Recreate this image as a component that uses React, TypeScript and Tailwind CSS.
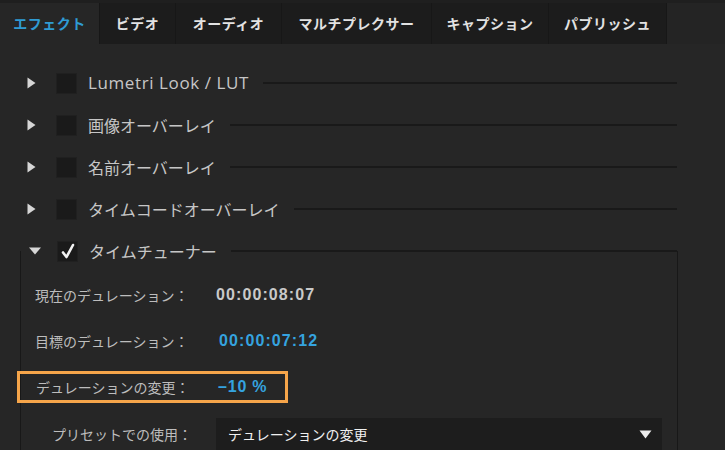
import React from 'react'

const jp = { fontFamily: '"Noto Sans CJK JP", "Noto Sans", sans-serif' }
const num = { fontFamily: '"Liberation Sans", "Noto Sans CJK JP", sans-serif' }
const latin = { fontFamily: '"Open Sans", "Noto Sans CJK JP", sans-serif' }

const tabs = ['エフェクト', 'ビデオ', 'オーディオ', 'マルチプレクサー', 'キャプション', 'パブリッシュ']
const tabWidths = ['w-[100px]', 'w-[76px]', 'w-[106px]', 'w-[150px]', 'w-[117px]', 'w-[118px]']

function Arrow({ open }: { open?: boolean }) {
  if (open) {
    return (
      <svg width="14" height="8" viewBox="0 0 14 8" className="shrink-0">
        <path d="M1 0.5 H13 L7 7.5 Z" fill="#d6d6d6" />
      </svg>
    )
  }
  return (
    <svg width="9" height="12" viewBox="0 0 9 12" className="shrink-0">
      <path d="M0.5 0.5 V11.5 L8.5 6 Z" fill="#d6d6d6" />
    </svg>
  )
}

function Check({ checked }: { checked?: boolean }) {
  return (
    <div className="w-[21px] h-[21px] bg-[#1a1a1a] border border-[#202020] flex items-center justify-center shrink-0">
      {checked && (
        <svg width="16" height="17" viewBox="0 0 16 17">
          <path d="M3 9.5 L6.5 14 L13 2" stroke="#f2f2f2" strokeWidth="2.6" fill="none" strokeLinecap="round" strokeLinejoin="round" />
        </svg>
      )}
    </div>
  )
}

function EffectRow({ label, isLatin }: { label: string; isLatin?: boolean }) {
  return (
    <div className="h-[42px] flex items-center pl-[27px] pr-[48px]">
      <div className="w-[29px]"><Arrow /></div>
      <Check />
      <span
        className={`ml-[11px] text-[#c6c6c6] whitespace-nowrap ${isLatin ? 'text-[17px] tracking-[0.6px]' : 'text-[16px]'}`}
        style={isLatin ? latin : jp}
      >
        {label}
      </span>
      <div className="flex-1 h-[2px] bg-[#191919] ml-[14px]" />
    </div>
  )
}

export default function App() {
  return (
    <div className="w-[725px] h-[450px] overflow-hidden bg-[#262626] flex flex-col" style={jp}>
      {/* Tabs */}
      <div className="h-[44px] flex items-end bg-[#1f1f1f] shrink-0">
        <div className="flex h-[41px] flex-1">
          {tabs.map((t, i) => (
            <div
              key={t}
              className={`${tabWidths[i]} flex items-center justify-center text-[14px] tracking-[0.5px] font-bold border-r border-[#171717] ${
                i === 0 ? 'bg-[#262626] text-[#2f9bd3]' : 'bg-[#1c1c1c] text-[#e2e2e2]'
              }`}
            >
              {t}
            </div>
          ))}
          <div className="flex-1 bg-[#242424]" />
        </div>
      </div>

      <div className="pt-[18px] flex flex-col">
        <EffectRow label="Lumetri Look / LUT" isLatin />
        <EffectRow label="画像オーバーレイ" />
        <EffectRow label="名前オーバーレイ" />
        <EffectRow label="タイムコードオーバーレイ" />

        {/* Time tuner group */}
        <div className="mt-[21px] ml-[20px] mr-[47px] border-l border-r border-[#181818] h-[300px] flex flex-col">
          <div className="-mt-[21px] h-[42px] shrink-0 flex items-center pl-[7px]">
            <div className="w-[29px]"><Arrow open /></div>
            <Check checked />
            <span className="ml-[11px] text-[16px] text-[#c6c6c6] whitespace-nowrap">タイムチューナー</span>
            <div className="flex-1 h-[2px] bg-[#191919] ml-[14px]" />
          </div>

          <div className="h-[46px] shrink-0 flex items-center">
            <span className="w-[195px] pl-[14px] text-[14px] text-[#bdbdbd]">現在のデュレーション：</span>
            <span className="text-[16px] font-bold tracking-[1.1px] text-[#c9c9c9]" style={num}>00:00:08:07</span>
          </div>
          <div className="h-[46px] shrink-0 flex items-center">
            <span className="w-[198px] pl-[14px] text-[14px] text-[#bdbdbd]">目標のデュレーション：</span>
            <span className="text-[16px] font-bold tracking-[1.1px] text-[#35a3df]" style={num}>00:00:07:12</span>
          </div>
          <div className="h-[46px] shrink-0 flex items-center">
            <div className="-ml-[4px] w-[271px] h-[32px] border-[3px] border-[#f6a54a] flex items-center pl-[16px]">
              <span className="w-[182px] text-[14px] text-[#bdbdbd]">デュレーションの変更：</span>
              <span className="text-[16px] font-bold tracking-[0.8px] text-[#35a3df]" style={num}>–10 %</span>
            </div>
          </div>
          <div className="h-[48px] shrink-0 flex items-center">
            <span className="w-[195px] pl-[31px] text-[14px] text-[#bdbdbd]">プリセットでの使用：</span>
            <div className="w-[446px] h-[32px] bg-[#1d1d1d] flex items-center justify-between pl-[12px] pr-[10px]">
              <span className="text-[14px] text-[#f0f0f0]">デュレーションの変更</span>
              <svg width="13" height="9" viewBox="0 0 13 9">
                <path d="M0.5 0.5 H12.5 L6.5 8.5 Z" fill="#ececec" />
              </svg>
            </div>
          </div>
        </div>
      </div>
    </div>
  )
}
